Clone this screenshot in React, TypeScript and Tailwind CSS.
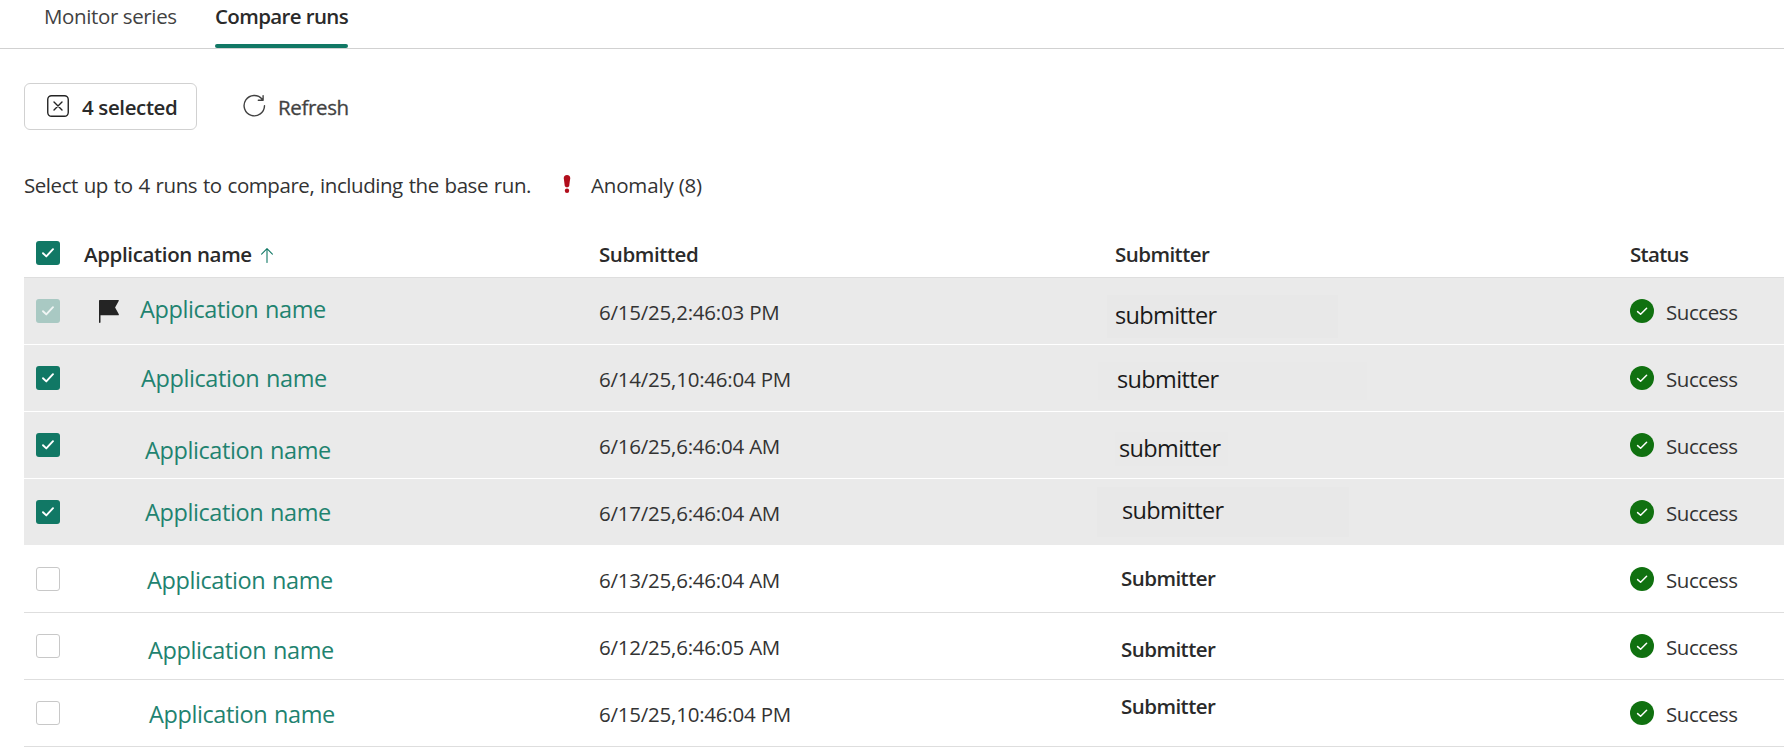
type Mark = "locked" | "on" | "off";

const text = "text-[20.5px] leading-[30px] whitespace-nowrap";
const semi = "text-[20.5px] leading-[30px] whitespace-nowrap font-semibold text-[#2a2a2a]";

const small = "text-[20.5px] leading-[30px] font-semibold tracking-[-0.55px] text-[#2a2a2a]";
const large = "text-[23.5px] leading-8 tracking-[-0.65px] text-[#1a1a1a]";

interface Run {
  mark: Mark;
  base?: boolean;
  name: string;
  submitted: string;
  submitter: string;
  submitterAt: string;
  submitterStyle: string;
  patch: string;
}

const runs: Run[] = [
  { mark: "locked", base: true, name: "pl-[21px] pt-[15px]", submitted: "6/15/25,2:46:03 PM", submitter: "submitter", submitterStyle: large, submitterAt: "pl-[8px] pt-[4px]", patch: "ml-[-8px] mt-[17px] w-[231px] h-[43px] bg-[#e8e8e8]" },
  { mark: "on", name: "pl-[57px] pt-[17px]", submitted: "6/14/25,10:46:04 PM", submitter: "submitter", submitterStyle: large, submitterAt: "pl-[19px] pt-[1px]", patch: "ml-[-17px] mt-[17px] w-[269px] h-[38px] bg-[#e9e9e9]" },
  { mark: "on", name: "pl-[61px] pt-[22px]", submitted: "6/16/25,6:46:04 AM", submitter: "submitter", submitterStyle: large, submitterAt: "pl-[4px] pt-0", patch: "ml-0 mt-[20px] w-[113px] h-[34px] bg-[#e9e9e9]" },
  { mark: "on", name: "pl-[61px] pt-[17px]", submitted: "6/17/25,6:46:04 AM", submitter: "submitter", submitterStyle: large, submitterAt: "pl-[25px] pt-[7px]", patch: "ml-[-18px] mt-[8px] w-[252px] h-[50px] bg-[#e8e8e8]" },
  { mark: "off", name: "pl-[63px] pt-[18px]", submitted: "6/13/25,6:46:04 AM", submitter: "Submitter", submitterStyle: small, submitterAt: "pl-[6px] pt-[17px]", patch: "" },
  { mark: "off", name: "pl-[64px] pt-[21px]", submitted: "6/12/25,6:46:05 AM", submitter: "Submitter", submitterStyle: small, submitterAt: "pl-[6px] pt-[21px]", patch: "" },
  { mark: "off", name: "pl-[65px] pt-[18px]", submitted: "6/15/25,10:46:04 PM", submitter: "Submitter", submitterStyle: small, submitterAt: "pl-[6px] pt-[11px]", patch: "" },
];

function Checkbox({ mark }: { mark: Mark }) {
  if (mark === "off") return <div className="size-6 rounded-[3px] border border-[#c8c8c8] bg-white" />;
  return (
    <div className={mark === "on" ? "size-6 rounded-[3px] bg-[#117865]" : "size-6 rounded-[3px] bg-[#a9c9c3]"}>
      <svg viewBox="0 0 24 24" className="size-6" fill="none" stroke={mark === "on" ? "#fff" : "#f0f5f4"} strokeWidth="1.9" strokeLinecap="round" strokeLinejoin="round">
        <path d="M7 12.2 10.3 15.4 17 8.2" />
      </svg>
    </div>
  );
}

function Success() {
  return (
    <div className="flex pt-[19px]">
      <svg viewBox="0 0 24 24" className="mt-[2px] size-6">
        <circle cx="12" cy="12" r="12" fill="#107110" />
        <path d="M7.6 12.6 10.6 15.3 16.6 9.3" fill="none" stroke="#fff" strokeWidth="1.5" strokeLinecap="round" strokeLinejoin="round" />
      </svg>
      <span className={`${text} ml-[12px] tracking-[-0.42px]`}>Success</span>
    </div>
  );
}

const columns = "grid grid-cols-[60px_515px_516px_515px_154px]";

export default function App() {
  return (
    <div className="h-[749px] w-[1784px] overflow-hidden bg-white font-['Open_Sans',sans-serif] text-[#333333]">
      <nav className="flex h-[49px] border-b border-[#d1d1d1] pl-[44px]">
        <div className={`${text} mt-px w-[171px] tracking-[-0.38px] text-[#424242]`}>Monitor series</div>
        <div className="flex w-[133px] flex-col justify-between pt-px">
          <span className={`${semi} tracking-[-0.62px]`}>Compare runs</span>
          <div className="h-1 rounded-full bg-[#117865]" />
        </div>
      </nav>

      <div className="mt-[34px] flex h-[47px] pl-6">
        <button className="flex w-[173px] rounded-[6px] border border-[#d1d1d1] pl-[22px]">
          <svg viewBox="0 0 22 22" className="mt-[11px] size-[22px]" fill="none" stroke="#242424" strokeWidth="1.4" strokeLinecap="round">
            <rect x="0.75" y="0.75" width="20.5" height="20.5" rx="3.8" />
            <path d="M7 7 15 15M15 7 7 15" />
          </svg>
          <span className={`${semi} ml-[13px] mt-[8px] tracking-[-0.38px]`}>4 selected</span>
        </button>
        <button className="ml-[45px] flex text-[#424242]">
          <svg viewBox="0 0 24 24" className="mt-[11px] size-6" fill="none" stroke="#424242" strokeWidth="1.4" strokeLinecap="round" strokeLinejoin="round">
            <path d="M20.2 5.2A10.2 10.2 0 1 0 22.500 11.800M21.100 1.600V6.200H16.300" />
          </svg>
          <span className={`${text} ml-[12px] mt-[9px] tracking-[-0.35px] [-webkit-text-stroke:0.3px_#424242]`}>Refresh</span>
        </button>
      </div>

      <div className="mt-[40px] flex h-[30px] pl-6">
        <span className={`${text} w-[539px] tracking-[-0.45px] [word-spacing:1px]`}>Select up to 4 runs to compare, including the base run.</span>
        <svg viewBox="0 0 8 18" className="mt-[5px] h-[18px] w-2" fill="#b10e1c">
          <path d="M4 0C6.200 0 7.400 1.300 7.200 3.200L6.300 10.200C6.100 11.600 5.300 12.300 4 12.300S1.900 11.600 1.700 10.200L.8 3.200C.6 1.300 1.800 0 4 0Z" />
          <circle cx="4" cy="15.700" r="2.200" />
        </svg>
        <span className={`${text} ml-[20px] tracking-[-0.17px]`}>Anomaly (8)</span>
      </div>

      <div className="mt-[39px] pl-6">
        <div className={`${columns} h-[39px] border-b border-[#dedede]`}>
          <div className="pl-3 pt-[2px]"><Checkbox mark="on" /></div>
          <div className="flex">
            <span className={`${semi} tracking-[-0.36px]`}>Application name</span>
            <svg viewBox="0 0 12 15" className="ml-[9px] mt-[9px] h-[15px] w-3" fill="none" stroke="#117865" strokeWidth="1.1" strokeLinecap="round" strokeLinejoin="round">
              <path d="M6 14.500V.7M.6 6.100 6 .7l5.400 5.400" />
            </svg>
          </div>
          <span className={`${semi} tracking-[-0.42px]`}>Submitted</span>
          <span className={`${semi} tracking-[-0.55px]`}>Submitter</span>
          <span className={`${semi} tracking-[-0.7px]`}>Status</span>
        </div>

        {runs.map((run, i) => (
          <div
            key={i}
            className={`${columns} h-[67px] border-b ${i < 4 ? "border-white bg-[#eaeaea]" : "border-[#dedede]"}`}
          >
            <div className="pl-3 pt-[21px]"><Checkbox mark={run.mark} /></div>
            <div className="flex">
              {run.base && (
                <svg viewBox="0 0 20 23" className="ml-[15px] mt-[22px] h-[23px] w-5" fill="#242424">
                  <path d="M0 1C0 .4.400 0 1 0H19.200C19.900 0 20.100.6 19.700 1.100L16.100 7.500 19.700 14.100C20.100 14.700 19.800 15.300 19.100 15.300H1.500V22.200C1.500 23.200 0 23.200 0 22.200Z" />
                </svg>
              )}
              <a className={`${run.name} whitespace-nowrap text-[23.5px] leading-8 tracking-[-0.4px] text-[#1f8370] [word-spacing:1px]`}>Application name</a>
            </div>
            <span className={`${text} mt-[19px] tracking-[-0.22px]`}>{run.submitted}</span>
            <div className="flex items-start">
              <div className={run.patch}>
                <div className={`${run.submitterAt} ${run.submitterStyle}`}>{run.submitter}</div>
              </div>
            </div>
            <Success />
          </div>
        ))}
      </div>
    </div>
  );
}
